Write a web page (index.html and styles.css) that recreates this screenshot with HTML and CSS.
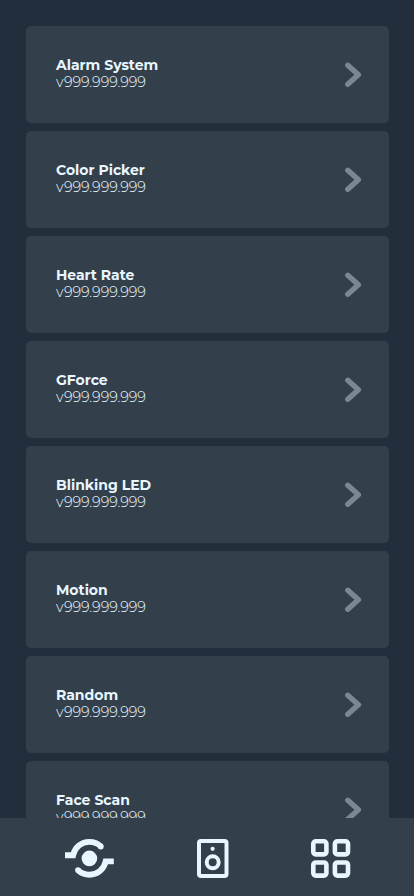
FILE: index.html
```
<!DOCTYPE html>
<html lang="en">
<head>
<meta charset="utf-8">
<meta name="viewport" content="width=device-width, initial-scale=1">
<title>Apps</title>
<link rel="stylesheet" href="styles.css">
</head>
<body>
<svg width="0" height="0" class="defs"><symbol id="chevron" viewBox="0 0 18 25"><path d="M2.8 3.3 13.4 12.8 2.8 22.2" fill="none" stroke="currentColor" stroke-width="5.4" stroke-linecap="round" stroke-linejoin="round"/></symbol></svg>
<main class="list">
<a class="card"><div class="info"><h2>Alarm System</h2><p>v999.999.999</p></div><svg class="chevron"><use href="#chevron"/></svg></a>
<a class="card"><div class="info"><h2>Color Picker</h2><p>v999.999.999</p></div><svg class="chevron"><use href="#chevron"/></svg></a>
<a class="card"><div class="info"><h2>Heart Rate</h2><p>v999.999.999</p></div><svg class="chevron"><use href="#chevron"/></svg></a>
<a class="card"><div class="info"><h2>GForce</h2><p>v999.999.999</p></div><svg class="chevron"><use href="#chevron"/></svg></a>
<a class="card"><div class="info"><h2>Blinking LED</h2><p>v999.999.999</p></div><svg class="chevron"><use href="#chevron"/></svg></a>
<a class="card"><div class="info"><h2>Motion</h2><p>v999.999.999</p></div><svg class="chevron"><use href="#chevron"/></svg></a>
<a class="card"><div class="info"><h2>Random</h2><p>v999.999.999</p></div><svg class="chevron"><use href="#chevron"/></svg></a>
<a class="card"><div class="info"><h2>Face Scan</h2><p>v999.999.999</p></div><svg class="chevron"><use href="#chevron"/></svg></a>
</main>
<nav class="tabs">
<svg width="50" height="40" viewBox="0 0 50 40"><circle cx="24.4" cy="20.4" r="7.8" fill="currentColor"/><path d="M0 17.3H8.1C9.8 9.4 16.4 4 24.4 4 29 4 33 5.8 35.9 8.6M48.8 23.5H40.7C39 31.4 32.4 36.8 24.4 36.8 19.8 36.8 15.8 35 12.9 32.2" transform="translate(0 -.1)" fill="none" stroke="currentColor" stroke-width="5.9"/><circle cx="35.8" cy="8.5" r="2.9" fill="currentColor"/><circle cx="13" cy="32.1" r="2.9" fill="currentColor"/></svg>
<svg width="32" height="40" viewBox="0 0 32 40"><g fill="none" stroke="currentColor" stroke-width="4"><rect x="2" y="3" width="27.5" height="35" rx="2"/><circle cx="15.7" cy="24.3" r="6"/></g><circle cx="15.6" cy="10.8" r="2.1" fill="currentColor"/></svg>
<svg width="40" height="40" viewBox="0 0 40 40"><g fill="none" stroke="currentColor" stroke-width="4.6"><rect x="2.3" y="3.3" width="13.1" height="13.1" rx="2.5"/><rect x="23.9" y="3.3" width="13.1" height="13.1" rx="2.5"/><rect x="2.3" y="24.5" width="13.1" height="13.1" rx="2.5"/><rect x="23.9" y="24.5" width="13.1" height="13.1" rx="2.5"/></g></svg>
</nav>
</body>
</html>
```
FILE: styles.css
```
* { box-sizing: border-box; }
body {
  margin: 0;
  height: 896px;
  overflow: hidden;
  display: flex;
  flex-direction: column;
  background: #222e3c;
  color: #e8f6ff;
  font-family: Montserrat, Inter, sans-serif;
}
.defs { display: none; }
.list {
  height: 818px;
  flex: none;
  overflow: hidden;
  padding: 26px 25px 0 26px;
  display: flex;
  flex-direction: column;
  gap: 8px;
}
.card {
  height: 97px;
  flex: none;
  display: flex;
  align-items: center;
  justify-content: space-between;
  padding: 0 26px 0 30px;
  border-radius: 5px;
  background: #333f4b;
}
.info { padding-bottom: 2px; }
h2, p { margin: 0; font-size: 14px; line-height: 17px; white-space: nowrap; }
h2 { font-weight: 700; }
p { font-weight: 300; font-size: 14.3px; letter-spacing: -0.08px; }
.chevron { width: 18px; height: 25px; color: #7b8794; }
.tabs {
  height: 78px;
  flex: none;
  display: flex;
  justify-content: space-between;
  padding: 20px 63px 0 65px;
  background: #333f4b;
}
```
